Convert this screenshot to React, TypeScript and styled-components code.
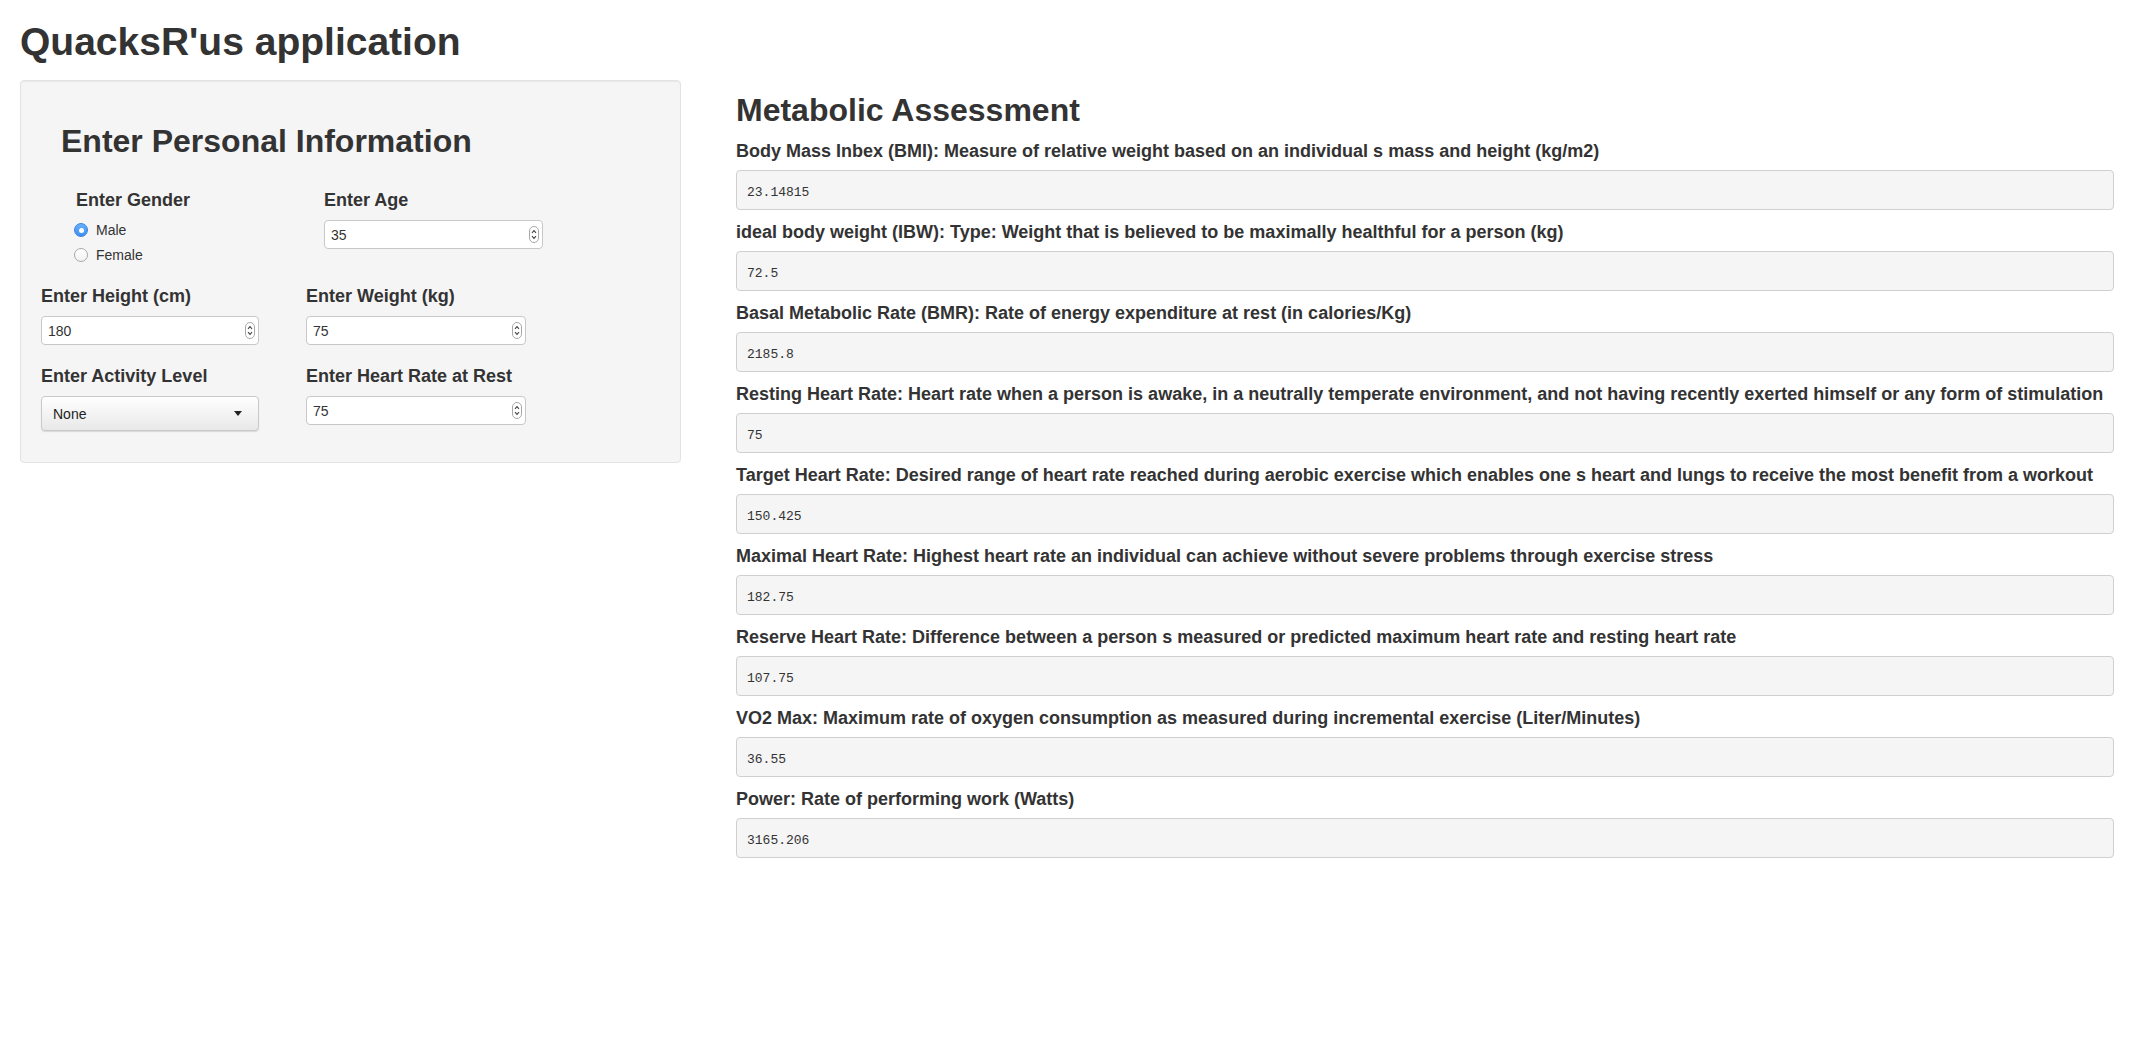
import React from "react";
import styled, { createGlobalStyle } from "styled-components";

const GlobalStyle = createGlobalStyle`
  html, body { margin: 0; padding: 0; background: #fff; }
  body {
    font-family: "Liberation Sans", Arial, Helvetica, sans-serif;
    color: #333;
  }
  * { box-sizing: border-box; }
`;

const Page = styled.div`
  padding: 0 20px;
`;

const Title = styled.h1`
  margin: 21px 0 16px;
  font-size: 39px;
  line-height: 1.1;
  font-weight: 700;
`;

const Columns = styled.div`
  display: flex;
  align-items: flex-start;
  gap: 55px;
`;

const Sidebar = styled.div`
  flex: 0 0 661px;
`;

const Panel = styled.div`
  background: #f5f5f5;
  border: 1px solid #e3e3e3;
  border-radius: 4px;
  padding: 20px 20px 31px;
  box-shadow: inset 0 1px 1px rgba(0, 0, 0, 0.05);
`;

const PanelHeading = styled.h2`
  margin: 23px 0 29px 20px;
  font-size: 32px;
  line-height: 1.1;
  font-weight: 700;
`;

const FormGrid = styled.div`
  display: grid;
  grid-template-columns: 218px 220px;
  column-gap: 47px;
  row-gap: 19px;
`;

const Field = styled.div<{ $offset?: number; $width?: number }>`
  margin-left: ${(p) => p.$offset ?? 0}px;
  width: ${(p) => (p.$width ? `${p.$width}px` : "auto")};
`;

const FieldLabel = styled.label`
  display: block;
  font-size: 18px;
  font-weight: 700;
  line-height: 25px;
  margin-bottom: 7px;
  white-space: nowrap;
`;

const RadioList = styled.div`
  display: flex;
  flex-direction: column;
  gap: 5px;
  margin-left: -2px;
`;

const RadioItem = styled.div`
  display: flex;
  align-items: center;
  gap: 8px;
  height: 20px;
  font-size: 14px;
`;

const RadioDot = styled.span<{ $checked?: boolean }>`
  position: relative;
  width: 14px;
  height: 14px;
  border-radius: 50%;
  flex: 0 0 14px;
  border: 1px solid ${(p) => (p.$checked ? "#3a82dc" : "#a8a8a8")};
  background: ${(p) =>
    p.$checked ? "linear-gradient(#69b1fb, #3d8ff1)" : "linear-gradient(#fff, #f2f2f2)"};
  &::after {
    content: "";
    display: ${(p) => (p.$checked ? "block" : "none")};
    position: absolute;
    left: 50%;
    top: 50%;
    width: 5px;
    height: 5px;
    margin: -2.5px 0 0 -2.5px;
    border-radius: 50%;
    background: #fff;
  }
`;

const NumberBox = styled.div`
  height: 29px;
  width: 100%;
  background: #fff;
  border: 1px solid #c8c8c8;
  border-radius: 4px;
  display: flex;
  align-items: center;
  justify-content: space-between;
  padding: 0 3px 0 6px;
  font-size: 14px;
  color: #333;
`;

const SelectBox = styled.div`
  height: 35px;
  width: 100%;
  border: 1px solid #c9c9c9;
  border-radius: 4px;
  background: linear-gradient(#ffffff, #e8e8e8);
  box-shadow: 0 1px 1px rgba(0, 0, 0, 0.12);
  display: flex;
  align-items: center;
  justify-content: space-between;
  padding: 0 16px 0 11px;
  font-size: 14px;
  color: #222;
`;

const Caret = styled.span`
  width: 0;
  height: 0;
  border-left: 4px solid transparent;
  border-right: 4px solid transparent;
  border-top: 5px solid #222;
`;

const Results = styled.div`
  flex: 1;
  min-width: 0;
`;

const ResultsHeading = styled.h2`
  margin: 13px 0 11px;
  font-size: 32px;
  line-height: 1.1;
  font-weight: 700;
`;

const ResultLabel = styled.div`
  font-size: 18px;
  font-weight: 700;
  line-height: 25px;
  margin-bottom: 6px;
  white-space: nowrap;
`;

const Output = styled.pre`
  margin: 0 0 10px;
  height: 40px;
  padding: 5px 10px 0;
  line-height: 33px;
  font-family: "Liberation Mono", "DejaVu Sans Mono", monospace;
  font-size: 13px;
  color: #333;
  background: #f5f5f5;
  border: 1px solid #cfcfcf;
  border-radius: 4px;
  overflow: hidden;
`;

const Spinner = () => (
  <svg width="10" height="17" viewBox="0 0 10 17" aria-hidden="true">
    <rect x="0.5" y="0.5" width="9" height="16" rx="4.5" fill="#fff" stroke="#a8a8a8" />
    <path d="M3 6.8 L5 4.6 L7 6.8" stroke="#444" strokeWidth="1.1" fill="none" />
    <path d="M3 10.2 L5 12.4 L7 10.2" stroke="#444" strokeWidth="1.1" fill="none" />
  </svg>
);

const NumberInput = ({ value }: { value: string }) => (
  <NumberBox>
    <span>{value}</span>
    <Spinner />
  </NumberBox>
);

const results: { label: string; value: string }[] = [
  {
    label:
      "Body Mass Inbex (BMI): Measure of relative weight based on an individual s mass and height (kg/m2)",
    value: "23.14815",
  },
  {
    label:
      "ideal body weight (IBW): Type: Weight that is believed to be maximally healthful for a person (kg)",
    value: "72.5",
  },
  {
    label: "Basal Metabolic Rate (BMR): Rate of energy expenditure at rest (in calories/Kg)",
    value: "2185.8",
  },
  {
    label:
      "Resting Heart Rate: Heart rate when a person is awake, in a neutrally temperate environment, and not having recently exerted himself or any form of stimulation",
    value: "75",
  },
  {
    label:
      "Target Heart Rate: Desired range of heart rate reached during aerobic exercise which enables one s heart and lungs to receive the most benefit from a workout",
    value: "150.425",
  },
  {
    label:
      "Maximal Heart Rate: Highest heart rate an individual can achieve without severe problems through exercise stress",
    value: "182.75",
  },
  {
    label:
      "Reserve Heart Rate: Difference between a person s measured or predicted maximum heart rate and resting heart rate",
    value: "107.75",
  },
  {
    label:
      "VO2 Max: Maximum rate of oxygen consumption as measured during incremental exercise (Liter/Minutes)",
    value: "36.55",
  },
  { label: "Power: Rate of performing work (Watts)", value: "3165.206" },
];

export default function App() {
  return (
    <>
      <GlobalStyle />
      <Page>
        <Title>QuacksR'us application</Title>
        <Columns>
          <Sidebar>
            <Panel>
              <PanelHeading>Enter Personal Information</PanelHeading>
              <FormGrid>
                <Field $offset={35}>
                  <FieldLabel>Enter Gender</FieldLabel>
                  <RadioList>
                    <RadioItem>
                      <RadioDot $checked />
                      Male
                    </RadioItem>
                    <RadioItem>
                      <RadioDot />
                      Female
                    </RadioItem>
                  </RadioList>
                </Field>
                <Field $offset={18} $width={219}>
                  <FieldLabel>Enter Age</FieldLabel>
                  <NumberInput value="35" />
                </Field>
                <Field>
                  <FieldLabel>Enter Height (cm)</FieldLabel>
                  <NumberInput value="180" />
                </Field>
                <Field>
                  <FieldLabel>Enter Weight (kg)</FieldLabel>
                  <NumberInput value="75" />
                </Field>
                <Field>
                  <FieldLabel>Enter Activity Level</FieldLabel>
                  <SelectBox>
                    <span>None</span>
                    <Caret />
                  </SelectBox>
                </Field>
                <Field>
                  <FieldLabel>Enter Heart Rate at Rest</FieldLabel>
                  <NumberInput value="75" />
                </Field>
              </FormGrid>
            </Panel>
          </Sidebar>
          <Results>
            <ResultsHeading>Metabolic Assessment</ResultsHeading>
            {results.map((r) => (
              <div key={r.label}>
                <ResultLabel>{r.label}</ResultLabel>
                <Output>{r.value}</Output>
              </div>
            ))}
          </Results>
        </Columns>
      </Page>
    </>
  );
}
